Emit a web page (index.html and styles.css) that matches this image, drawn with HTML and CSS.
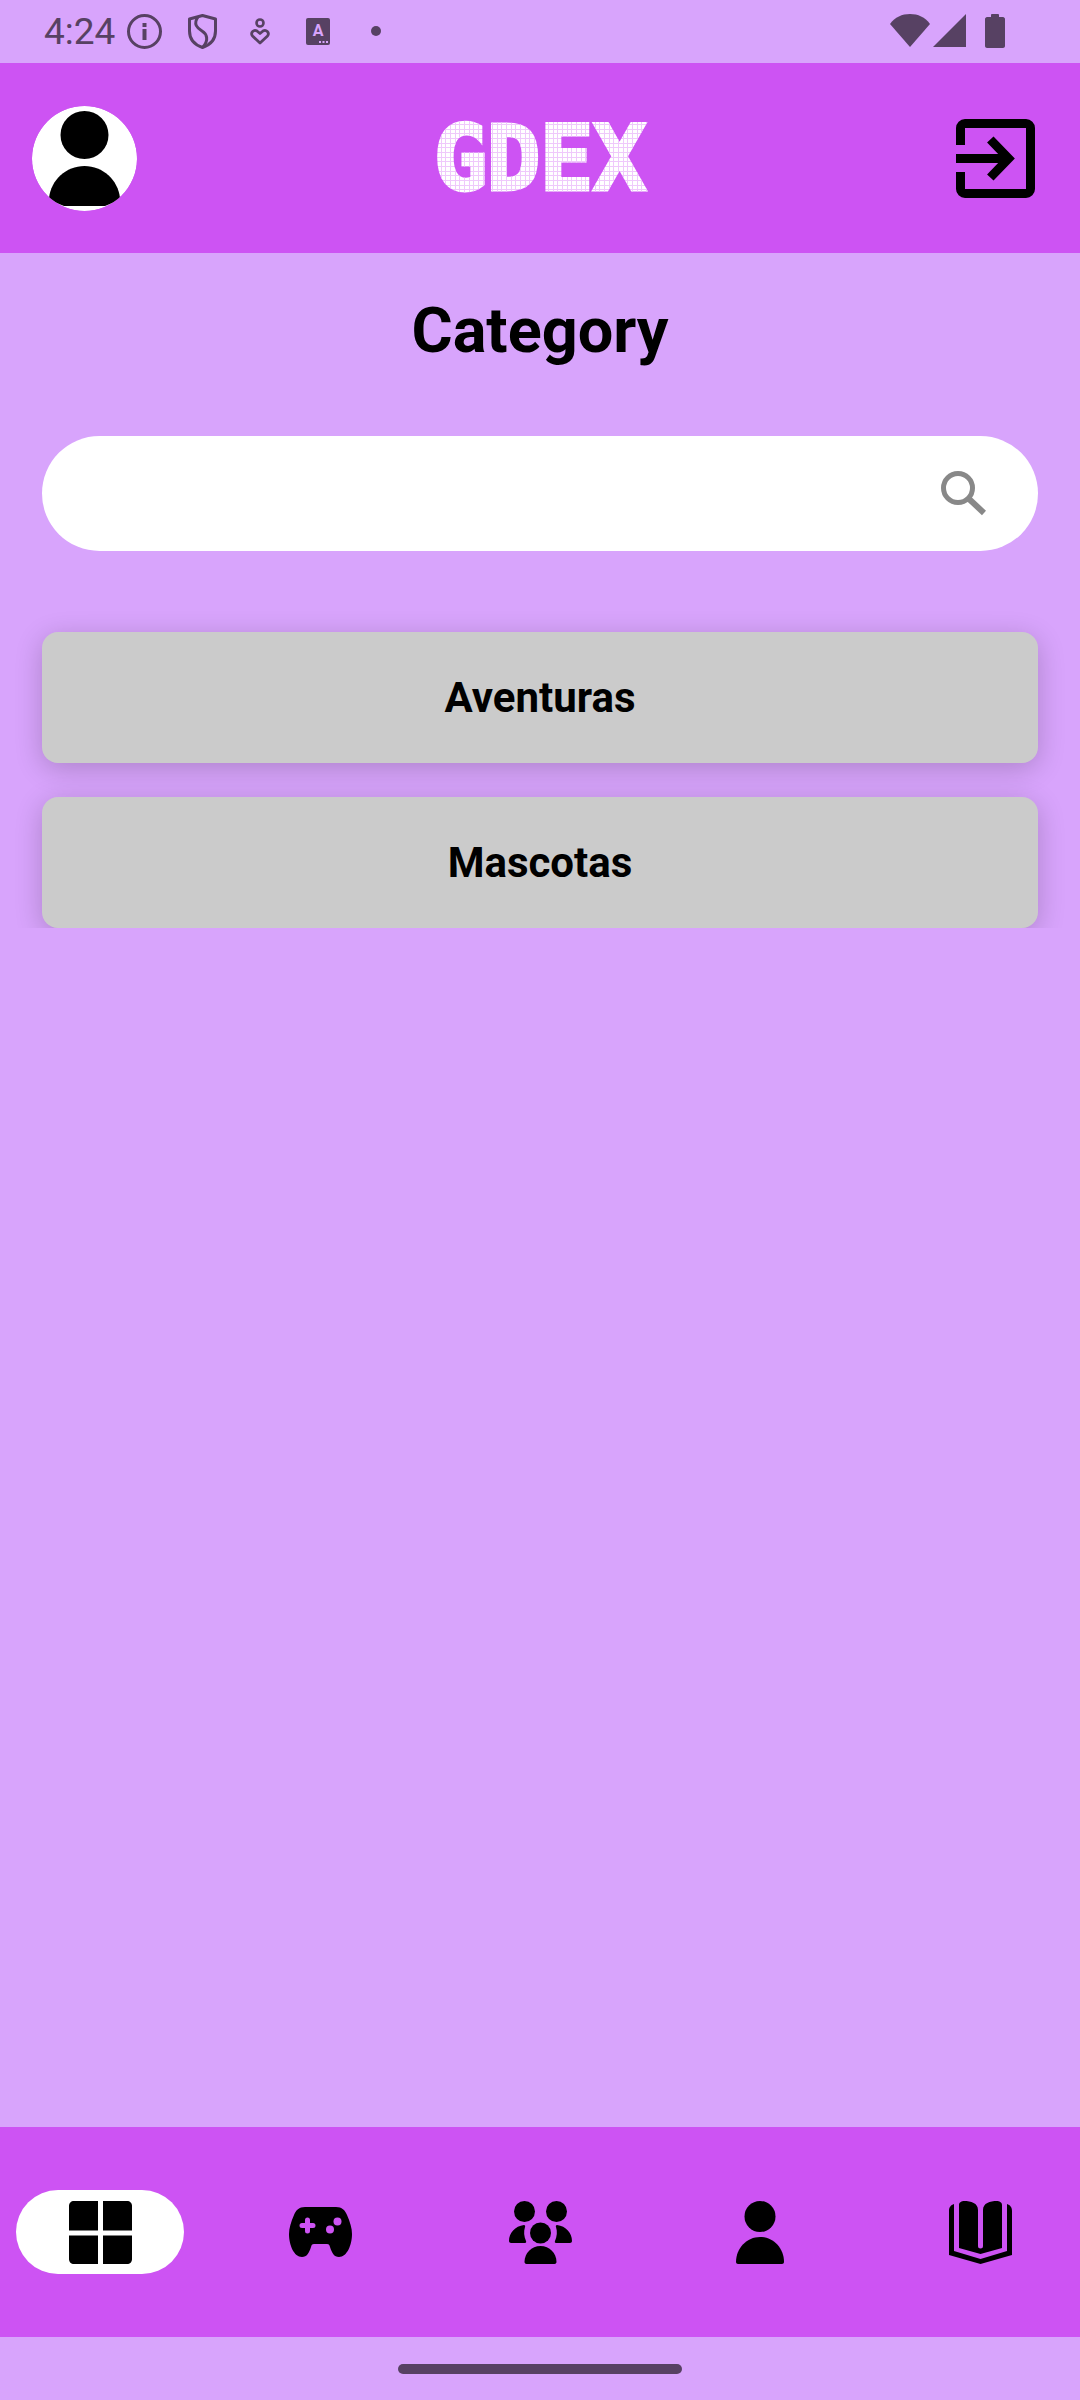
FILE: index.html
```html
<!DOCTYPE html>
<html lang="es">

<head>
    <meta charset="UTF-8">
    <meta name="viewport" content="width=device-width, initial-scale=1.0">
    <title>GDEX</title>
    <link rel="stylesheet" href="styles.css">
</head>

<body>
    <div class="status-bar">
        <div class="status-left">
            <span class="clock">4:24</span>
            <svg class="icon-info" width="35" height="35" viewBox="0 0 35 35">
                <circle cx="17.5" cy="17.5" r="16" fill="none" stroke="#574163" stroke-width="3"/>
                <rect x="15.5" y="15" width="4" height="11" fill="#574163"/>
                <rect x="15.5" y="9" width="4" height="4" fill="#574163"/>
            </svg>
            <svg class="icon-shield" width="29" height="35" viewBox="0 0 29 35">
                <path d="M14.5 1.5L27.5 5V17C27.5 26 22 31 14.5 33.5C7 31 1.5 26 1.5 17V5Z" fill="none" stroke="#574163" stroke-width="3" stroke-linejoin="round"/>
                <path d="M10 3C5 10 9 14 14 17C19 20 21 26 15 33" fill="none" stroke="#574163" stroke-width="3"/>
            </svg>
            <svg class="icon-heart" width="20" height="27" viewBox="0 0 20 27">
                <circle cx="10" cy="5" r="3.5" fill="none" stroke="#574163" stroke-width="2.6"/>
                <path d="M10 25L2.5 18C0 14.5 4 11 7 13L10 15.5L13 13C16 11 20 14.5 17.5 18Z" fill="none" stroke="#574163" stroke-width="2.8" stroke-linejoin="round"/>
            </svg>
            <svg class="icon-font" width="24" height="27" viewBox="0 0 24 27">
                <rect width="24" height="27" rx="2" fill="#574163"/>
                <text x="12" y="18" text-anchor="middle" font-family="Roboto" font-weight="700" font-size="16" fill="#d8a4fc">A</text>
                <rect x="13" y="23" width="2" height="2" fill="#d8a4fc"/>
                <rect x="16.5" y="23" width="2" height="2" fill="#d8a4fc"/>
                <rect x="20" y="23" width="2" height="2" fill="#d8a4fc"/>
            </svg>
            <span class="status-dot"></span>
        </div>
        <div class="status-right">
            <svg width="40" height="33" viewBox="0 0 40 33">
                <path d="M0 10C5 3 12 0 20 0C28 0 35 3 40 10L20 33Z" fill="#574163"/>
            </svg>
            <svg width="33" height="33" viewBox="0 0 33 33">
                <path d="M33 0V33H0Z" fill="#574163"/>
            </svg>
            <svg class="icon-battery" width="20" height="34" viewBox="0 0 20 34">
                <path d="M6 3V1C6 .5 6.500 0 7 0H13C13.500 0 14 .5 14 1V3H18C19 3 20 4 20 5V32C20 33 19 34 18 34H2C1 34 0 33 0 32V5C0 4 1 3 2 3Z" fill="#574163"/>
            </svg>
        </div>
    </div>

    <header class="app-header">
        <div class="avatar">
            <svg width="105" height="105" viewBox="0 0 105 105">
                <circle cx="52.500" cy="52.500" r="52.500" fill="#fff"/>
                <circle cx="52.500" cy="29" r="24" fill="#000"/>
                <path d="M17 92C19 74 34 60 52.500 60C71 60 86 74 88 92C84 95 79 98 73 100H32C26 98 21 95 17 92Z" fill="#000"/>
            </svg>
        </div>
        <div class="logo">GDEX</div>
        <svg class="logout" width="79" height="79" viewBox="0 0 79 79">
            <path d="M0 26V9A9 9 0 0 1 9 0H70A9 9 0 0 1 79 9V70A9 9 0 0 1 70 79H9A9 9 0 0 1 0 70V53H9V70H70V9H9V26Z" fill="#000"/>
            <path d="M0 39.500H54" stroke="#000" stroke-width="9"/>
            <path d="M34.300 20.500L52.600 39.500L34.300 58.500" fill="none" stroke="#000" stroke-width="9"/>
        </svg>
    </header>

    <main class="content">
        <h1>Category</h1>
        <div class="search">
            <input type="text" aria-label="Buscar">
            <svg width="45" height="45" viewBox="0 0 45 45">
                <circle cx="17" cy="17" r="14.500" fill="none" stroke="#888" stroke-width="5"/>
                <path d="M27 27L43 42" stroke="#888" stroke-width="6"/>
            </svg>
        </div>
        <div class="category-list">
            <button class="category">Aventuras</button>
            <button class="category">Mascotas</button>
        </div>
    </main>

    <nav class="bottom-nav">
        <div class="nav-item active">
            <svg width="63" height="63" viewBox="0 0 63 63">
                <path d="M5 0H29V29.500H0V5C0 2 2 0 5 0Z" fill="#000"/>
                <path d="M34 0H58C61 0 63 2 63 5V29.500H34Z" fill="#000"/>
                <path d="M0 34.500H29V63H5C2 63 0 61 0 58Z" fill="#000"/>
                <path d="M34 34.500H63V58C63 61 61 63 58 63H34Z" fill="#000"/>
            </svg>
        </div>
        <div class="nav-item">
            <svg width="63" height="50" viewBox="0 0 63 50">
                <path d="M16 0H47C53 0 56 3 58 8C61 15 63 21 63 27C63 38 58 50 50 50C45 50 43 46 41 40C40.500 38 40 37 38 37H25C23 37 22.500 38 22 40C20 46 18 50 13 50C5 50 0 38 0 27C0 21 2 15 5 8C7 3 10 0 16 0Z" fill="#000"/>
                <path d="M13 18.500H24M18.500 13V24" stroke="#cd53f3" stroke-width="5" stroke-linecap="round"/>
                <circle cx="48.500" cy="14.500" r="4" fill="#cd53f3"/>
                <circle cx="41" cy="22.500" r="4" fill="#cd53f3"/>
            </svg>
        </div>
        <div class="nav-item">
            <svg width="63" height="63" viewBox="0 0 63 63">
                <circle cx="15.500" cy="10.500" r="10.500" fill="#000"/>
                <circle cx="47.500" cy="10.500" r="10.500" fill="#000"/>
                <circle cx="31.500" cy="32" r="10.500" fill="#000"/>
                <path d="M15.500 61C15.500 52 22.500 45 31.500 45C40.500 45 47.500 52 47.500 61C47.500 62 46.500 63 45.500 63H17.500C16.500 63 15.500 62 15.500 61Z" fill="#000"/>
                <path d="M0 40C0 32 6 25 15 24C16 24 16.500 25 16 26C14.500 31 15 35 17 40C17.500 41 17 42 16 42H2C1 42 0 41 0 40Z" fill="#000"/>
                <path d="M63 40C63 32 57 25 48 24C47 24 46.500 25 47 26C48.500 31 48 35 46 40C45.500 41 46 42 47 42H61C62 42 63 41 63 40Z" fill="#000"/>
            </svg>
        </div>
        <div class="nav-item">
            <svg width="48" height="63" viewBox="0 0 48 63">
                <circle cx="24" cy="15.500" r="15.500" fill="#000"/>
                <path d="M0 61C0 47 11 36 24 36C37 36 48 47 48 61C48 62 47 63 46 63H2C1 63 0 62 0 61Z" fill="#000"/>
            </svg>
        </div>
        <div class="nav-item">
            <svg width="63" height="63" viewBox="0 0 63 63">
                <path d="M5 3V50L31.500 58L58 50V3C61 4 63 6 63 10V54L31.500 63L0 54V10C0 6 2 4 5 3Z" fill="#000"/>
                <path d="M10 4C10 1 13 0 15 0C22 0 29 2 29 9V45A2.500 2.500 0 0 0 34 45V9C34 2 41 0 48 0C50 0 53 1 53 4V47L31.500 53L10 47Z" fill="#000"/>
            </svg>
        </div>
    </nav>

    <div class="gesture-bar">
        <span class="gesture-pill"></span>
    </div>
</body>

</html>
```

FILE: styles.css
```css
* {
    box-sizing: border-box;
}

body {
    font-family: 'Roboto', sans-serif;
    background-color: #d8a4fc;
    color: #000;
    display: flex;
    flex-direction: column;
    height: 100vh;
    margin: 0;
}

.status-bar {
    height: 63px;
    flex-shrink: 0;
    display: flex;
    justify-content: space-between;
    padding: 14px 75px 0 44px;
}

.status-left {
    display: flex;
    align-items: flex-start;
}

.status-right {
    display: flex;
    align-items: flex-start;
    gap: 3px;
}

.clock {
    font-size: 37px;
    line-height: 35px;
    color: #574163;
    width: 83px;
}

.icon-shield {
    margin-left: 26px;
}

.icon-heart {
    margin-left: 33px;
    margin-top: 4px;
}

.icon-font {
    margin-left: 36px;
    margin-top: 4px;
}

.status-dot {
    width: 10px;
    height: 10px;
    margin-left: 41px;
    margin-top: 12px;
    border-radius: 50%;
    background-color: #574163;
}

.icon-battery {
    margin-left: 16px;
}

.app-header {
    height: 190px;
    flex-shrink: 0;
    background-color: #cd53f3;
    display: flex;
    align-items: center;
    padding: 0 45px 0 32px;
}

.avatar {
    width: 105px;
    height: 105px;
    border-radius: 50%;
    overflow: hidden;
}

.avatar svg,
.logout,
.nav-item svg {
    display: block;
}

/* pixel logo: real text, grid painted through the glyphs */
.logo {
    flex: 1;
    padding: 2px 14px 0 0;
    text-align: center;
    font-family: 'DejaVu Sans Mono', monospace;
    font-weight: 700;
    font-size: 90px;
    line-height: 100px;
    letter-spacing: -1.200px;
    color: transparent;
    -webkit-text-stroke: 3px transparent;
    background-color: #fff;
    background-image:
        repeating-linear-gradient(90deg, #efc9fb 0, #efc9fb 1px, transparent 1px, transparent 4.67px),
        repeating-linear-gradient(0deg, #efc9fb 0, #efc9fb 1px, transparent 1px, transparent 4.67px);
    -webkit-background-clip: text;
    background-clip: text;
}

.content {
    flex: 1;
    min-height: 0;
    display: flex;
    flex-direction: column;
}

h1 {
    font-size: 63px;
    line-height: 70px;
    font-weight: 700;
    text-align: center;
    margin: 43px 0 0;
}

.search {
    height: 115px;
    margin: 70px 42px 0;
    background: #fff;
    border-radius: 58px;
    display: flex;
    align-items: center;
    padding: 0 52px 0 60px;
}

.search input {
    flex: 1;
    border: none;
    outline: none;
    background: transparent;
    font-size: 40px;
}

.category-list {
    margin-top: 41px;
    padding: 40px 42px 0;
    display: flex;
    flex-direction: column;
    gap: 34px;
    overflow: hidden;
}

.category {
    height: 131px;
    flex-shrink: 0;
    border: none;
    border-radius: 16px;
    background-color: #cbcbcb;
    box-shadow: 0 6px 28px rgba(0, 0, 0, 0.2);
    font-family: 'Roboto', sans-serif;
    font-size: 42px;
    font-weight: 700;
    color: #000;
}

.bottom-nav {
    height: 210px;
    flex-shrink: 0;
    background-color: #cd53f3;
    display: flex;
    align-items: center;
    justify-content: space-between;
    padding: 0 16px;
}

.nav-item {
    width: 168px;
    height: 84px;
    display: flex;
    align-items: center;
    justify-content: center;
    border-radius: 42px;
}

.nav-item.active {
    background-color: #fff;
}

.gesture-bar {
    height: 63px;
    flex-shrink: 0;
    display: flex;
    justify-content: center;
    padding-top: 27px;
}

.gesture-pill {
    width: 284px;
    height: 10px;
    border-radius: 5px;
    background-color: #574163;
}
```
